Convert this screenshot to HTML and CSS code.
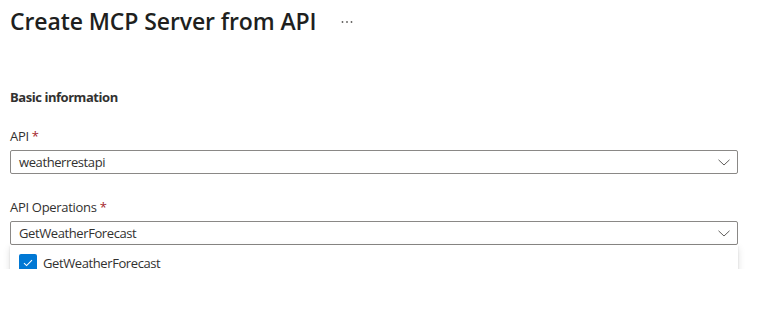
FILE: index.html
```html
<!DOCTYPE html>
<html lang="en">
<head>
<meta charset="utf-8">
<title>Create MCP Server from API</title>
<link rel="stylesheet" href="styles.css">
</head>
<body>
<div class="page">
  <header class="header">
    <h1 class="title">Create MCP Server from API</h1>
    <button class="more" aria-label="More actions">
      <svg width="12" height="4" viewBox="0 0 12 4"><circle cx="1.5" cy="2" r="0.9" fill="#605e5c"/><circle cx="6" cy="2" r="0.9" fill="#605e5c"/><circle cx="10.5" cy="2" r="0.9" fill="#605e5c"/></svg>
    </button>
  </header>

  <section class="form">
    <h2 class="section-title">Basic information</h2>

    <div class="field">
      <label class="label">API <span class="req">*</span></label>
      <div class="select">
        <span class="select-value">weatherrestapi</span>
        <svg class="chevron" width="12" height="7" viewBox="0 0 12 7"><path d="M0.5 0.8 L6 6 L11.5 0.8" fill="none" stroke="#605e5c" stroke-width="1"/></svg>
      </div>
    </div>

    <div class="field field-ops">
      <label class="label">API Operations <span class="req">*</span></label>
      <div class="select-wrap">
        <div class="select">
          <span class="select-value">GetWeatherForecast</span>
          <svg class="chevron" width="12" height="7" viewBox="0 0 12 7"><path d="M0.5 0.8 L6 6 L11.5 0.8" fill="none" stroke="#605e5c" stroke-width="1"/></svg>
        </div>
        <div class="menu">
          <div class="option">
            <span class="checkbox">
              <svg width="12" height="10" viewBox="0 0 12 10"><path d="M2 5.2 L4.6 7.6 L10 2.2" fill="none" stroke="#ffffff" stroke-width="1.1"/></svg>
            </span>
            <span class="option-text">GetWeatherForecast</span>
          </div>
        </div>
      </div>
    </div>
  </section>
</div>
</body>
</html>
```

FILE: styles.css
```css
* { box-sizing: border-box; }
html, body { margin: 0; padding: 0; background: #ffffff; }
body {
  font-family: "Open Sans", "Noto Sans", sans-serif;
  color: #323130;
  font-size: 13px;
}
.page {
  padding: 2px 24px 0 10px;
  width: 762px;
}
.header {
  display: flex;
  align-items: center;
  gap: 24px;
  height: 38px;
}
.title {
  margin: 0;
  font-size: 23px;
  font-weight: 600;
  color: #201f1e;
  letter-spacing: -0.1px;
}
.more {
  border: 0;
  background: none;
  padding: 0;
  display: flex;
  align-items: center;
  margin-top: 2px;
}
.form {
  padding-top: 48px;
  width: 728px;
}
.section-title {
  margin: 0 0 21px;
  font-size: 13px;
  font-weight: 700;
  line-height: 18px;
  letter-spacing: -0.45px;
}
.field {
  display: flex;
  flex-direction: column;
  gap: 5px;
  margin-bottom: 24px;
}
.label {
  font-size: 13px;
  line-height: 18px;
  color: #323130;
  letter-spacing: -0.3px;
}
.req { color: #a4262c; }
.select-wrap { position: relative; }
.select {
  height: 24px;
  border: 1px solid #8a8886;
  border-radius: 2px;
  display: flex;
  align-items: center;
  justify-content: space-between;
  padding: 0 7px 0 8px;
}
.select-value {
  font-size: 13px;
  line-height: 18px;
  letter-spacing: -0.4px;
}
.chevron { display: block; margin-top: 1px; }
.menu {
  position: absolute;
  left: 0;
  right: 0;
  top: 24px;
  height: 36px;
  background: #ffffff;
  box-shadow: 0 3.2px 7.2px rgba(0,0,0,0.132), 0 0.6px 1.8px rgba(0,0,0,0.108);
  display: flex;
  align-items: center;
  padding-left: 9px;
}
.option {
  display: flex;
  align-items: center;
  gap: 6px;
}
.checkbox {
  width: 18px;
  height: 18px;
  border-radius: 2px;
  background: #0078d4;
  display: flex;
  align-items: center;
  justify-content: center;
}
.option-text {
  font-size: 13px;
  line-height: 18px;
  letter-spacing: -0.4px;
}
```
